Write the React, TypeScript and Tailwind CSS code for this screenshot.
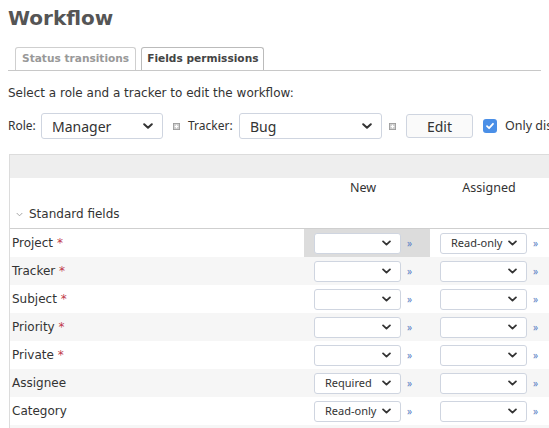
import React from "react";

type Field = {
  name: string;
  required?: boolean;
  newValue?: string;
  assignedValue?: string;
};

const fields: Field[] = [
  { name: "Project", required: true, assignedValue: "Read-only" },
  { name: "Tracker", required: true },
  { name: "Subject", required: true },
  { name: "Priority", required: true },
  { name: "Private", required: true },
  { name: "Assignee", newValue: "Required" },
  { name: "Category", newValue: "Read-only" },
];

const Chevron = ({ className }: { className?: string }) => (
  <svg viewBox="0 0 10 6" className={className} fill="none" stroke="currentColor" strokeWidth="2" strokeLinecap="round" strokeLinejoin="round">
    <path d="M1.2 1.2 5 4.8 8.8 1.2" />
  </svg>
);

const PlusBox = ({ className }: { className?: string }) => (
  <svg viewBox="0 0 8 8" className={className}>
    <rect x="0.5" y="0.5" width="7" height="7" fill="#cfcfcf" stroke="#9a9a9a" />
    <path d="M4 2v4M2 4h4" stroke="#fff" strokeWidth="1.2" />
  </svg>
);

const BigSelect = ({ value, width }: { value: string; width: string }) => (
  <div className={`${width} shrink-0 h-[26px] flex items-center justify-between border border-[#cfd5e0] rounded-[3px] bg-white pl-[10px] pr-[9px] text-[14px] text-[#333]`}>
    <span>{value}</span>
    <Chevron className="w-[10px] h-[6px] text-[#333] shrink-0" />
  </div>
);

const SmallSelect = ({ value }: { value?: string }) => (
  <div className="w-[87px] shrink-0 h-[21px] flex items-center justify-between border border-[#cfd5e0] rounded-[3px] bg-white pl-[10px] pr-[9px] text-[11px] text-[#333]">
    <span>{value ?? ""}</span>
    <Chevron className="w-[9px] h-[6px] text-[#333] shrink-0" />
  </div>
);

const Cell = ({ value, highlight }: { value?: string; highlight?: boolean }) => (
  <div className={`w-[126px] shrink-0 h-full flex items-center pl-[10px] ${highlight ? "bg-[#dcdcdc]" : ""}`}>
    <SmallSelect value={value} />
    <span className="ml-[6px] text-[10px] text-[#5a7fc4]">»</span>
  </div>
);

export default function App() {
  return (
    <div className="w-[549px] h-[428px] overflow-hidden bg-white text-[#333] font-['DejaVu_Sans',sans-serif]">
      <div className="px-2 pt-[6px]">
        <h2 className="text-[20px] leading-[24px] font-bold text-[#555]">Workflow</h2>

        <div className="mt-[17px] flex items-end gap-[5px] pl-[7px] border-b border-[#c8c8c8]">
          <div className="h-[23px] flex items-center border border-b-0 border-[#cfcfcf] rounded-t-[3px] px-[6px] text-[10.6px] font-bold text-[#999]">
            Status transitions
          </div>
          <div className="h-[23px] flex items-center border border-b-0 border-[#bbb] rounded-t-[3px] px-[5px] text-[10.6px] font-bold text-[#444] bg-white">
            Fields permissions
          </div>
        </div>

        <p className="mt-[14px] text-[12px] leading-[16px]">Select a role and a tracker to edit the workflow:</p>

        <div className="mt-[12px] h-[26px] flex items-center whitespace-nowrap font-['Noto_Sans',sans-serif] text-[12px] text-[#333]">
          <span className="w-[33px] shrink-0">Role:</span>
          <BigSelect value="Manager" width="w-[122px]" />
          <PlusBox className="ml-[10px] w-[7px] h-[7px] shrink-0" />
          <span className="ml-[8px] w-[51px] shrink-0">Tracker:</span>
          <BigSelect value="Bug" width="w-[143px]" />
          <PlusBox className="ml-[7px] w-[7px] h-[7px] shrink-0" />
          <div className="ml-[10px] shrink-0 w-[67px] h-[24px] flex items-center justify-center border border-[#cfd5e0] rounded-[3px] bg-[#fafafa] text-[14px] text-[#333]">
            Edit
          </div>
          <div className="ml-[10px] shrink-0 w-[14px] h-[14px] rounded-[3px] bg-[#4a8fe7] flex items-center justify-center">
            <svg viewBox="0 0 10 10" className="w-[10px] h-[10px]" fill="none" stroke="#fff" strokeWidth="1.8" strokeLinecap="round" strokeLinejoin="round">
              <path d="M2 5.2 4.1 7.2 8 2.8" />
            </svg>
          </div>
          <span className="ml-[8px] shrink-0 text-[12.5px]">Only display fields that are used by this tracker</span>
        </div>

        <div className="mt-[15px] ml-px w-[640px] border-l border-t border-[#dcdcdc]">
          <div className="h-[23px] bg-[#eee]" />
          <div className="h-[20px] flex items-center font-['Noto_Sans',sans-serif] text-[12.5px] text-[#333]">
            <div className="w-[294px] shrink-0" />
            <div className="w-[126px] shrink-0 pr-[8px] text-center">New</div>
            <div className="w-[126px] shrink-0 pr-[8px] text-center">Assigned</div>
          </div>
          <div className="h-[31px] pt-[2px] flex items-center border-b border-[#cfcfcf] text-[12px]">
            <svg viewBox="0 0 8 5" className="ml-[6px] w-[7px] h-[5px]" fill="none" stroke="#9a9a9a" strokeWidth="1">
              <path d="M0.8 0.8 4 4 7.2 0.8" />
            </svg>
            <span className="ml-[6px]">Standard fields</span>
          </div>
          {fields.map((f, i) => (
            <div key={f.name} className={`h-[28px] flex items-center text-[12px] ${i % 2 === 1 ? "bg-[#f6f6f6]" : "bg-white"}`}>
              <div className="w-[294px] shrink-0 pl-[2px]">
                {f.name}
                {f.required && <span className="text-[#c0394b]"> *</span>}
              </div>
              <div className="font-['Noto_Sans',sans-serif] flex h-full">
                <Cell value={f.newValue} highlight={i === 0} />
                <Cell value={f.assignedValue} />
              </div>
            </div>
          ))}
          <div className="h-[10px] bg-[#f6f6f6]" />
        </div>
      </div>
    </div>
  );
}
